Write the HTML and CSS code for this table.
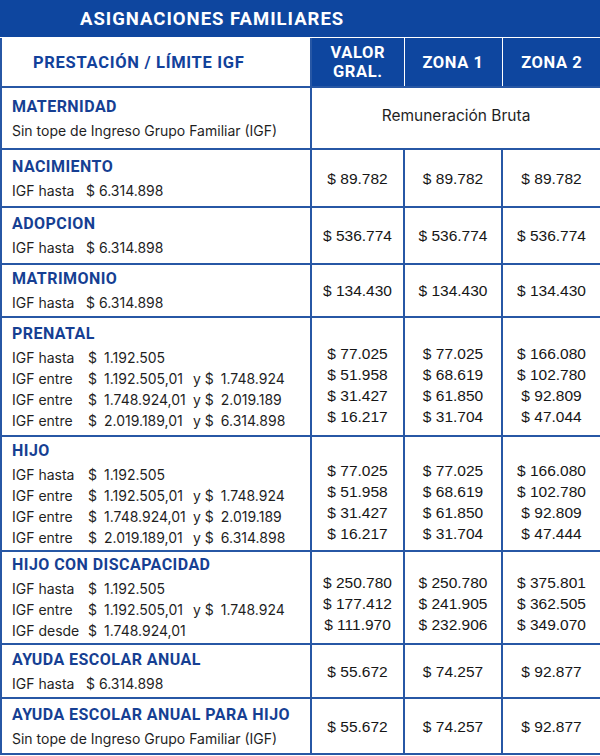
FILE: index.html
```html
<!DOCTYPE html>
<html lang="es">
<head>
<meta charset="utf-8">
<title>Asignaciones Familiares</title>
<link rel="stylesheet" href="styles.css">
</head>
<body>
<div class="title">ASIGNACIONES FAMILIARES</div>
<table class="grid">
  <colgroup>
    <col class="c1"><col class="c2"><col class="c3"><col class="c4">
  </colgroup>
  <thead>
    <tr class="hrow">
      <th class="h-main">PRESTACIÓN / LÍMITE IGF</th>
      <th class="h-val">VALOR<br>GRAL.</th>
      <th class="h-val">ZONA 1</th>
      <th class="h-val last">ZONA 2</th>
    </tr>
  </thead>
  <tbody>
    <tr class="r-mat">
      <td class="lab"><div class="name">MATERNIDAD</div><div class="ln">Sin tope de Ingreso Grupo Familiar (IGF)</div></td>
      <td class="span" colspan="3">Remuneración Bruta</td>
    </tr>
    <tr class="r-nac">
      <td class="lab"><div class="name">NACIMIENTO</div><div class="ln"><span class="k2">IGF hasta</span>$ 6.314.898</div></td>
      <td class="val">$ 89.782</td><td class="val">$ 89.782</td><td class="val">$ 89.782</td>
    </tr>
    <tr class="r-ado">
      <td class="lab"><div class="name">ADOPCION</div><div class="ln"><span class="k2">IGF hasta</span>$ 6.314.898</div></td>
      <td class="val">$ 536.774</td><td class="val">$ 536.774</td><td class="val">$ 536.774</td>
    </tr>
    <tr class="r-matr">
      <td class="lab"><div class="name">MATRIMONIO</div><div class="ln"><span class="k2">IGF hasta</span>$ 6.314.898</div></td>
      <td class="val">$ 134.430</td><td class="val">$ 134.430</td><td class="val">$ 134.430</td>
    </tr>
    <tr class="r-pre">
      <td class="lab"><div class="name">PRENATAL</div>
        <div class="ln"><span class="k">IGF hasta</span><span class="d">$</span>1.192.505</div>
        <div class="ln"><span class="k">IGF entre</span><span class="d">$</span><span class="a">1.192.505,01</span>y $<span class="a2">1.748.924</span></div>
        <div class="ln"><span class="k">IGF entre</span><span class="d">$</span><span class="a">1.748.924,01</span>y $<span class="a2">2.019.189</span></div>
        <div class="ln"><span class="k">IGF entre</span><span class="d">$</span><span class="a">2.019.189,01</span>y $<span class="a2">6.314.898</span></div>
      </td>
      <td class="val multi"><div>$ 77.025</div><div>$ 51.958</div><div>$ 31.427</div><div>$ 16.217</div></td>
      <td class="val multi"><div>$ 77.025</div><div>$ 68.619</div><div>$ 61.850</div><div>$ 31.704</div></td>
      <td class="val multi"><div>$ 166.080</div><div>$ 102.780</div><div>$ 92.809</div><div>$ 47.044</div></td>
    </tr>
    <tr class="r-hijo">
      <td class="lab"><div class="name">HIJO</div>
        <div class="ln"><span class="k">IGF hasta</span><span class="d">$</span>1.192.505</div>
        <div class="ln"><span class="k">IGF entre</span><span class="d">$</span><span class="a">1.192.505,01</span>y $<span class="a2">1.748.924</span></div>
        <div class="ln"><span class="k">IGF entre</span><span class="d">$</span><span class="a">1.748.924,01</span>y $<span class="a2">2.019.189</span></div>
        <div class="ln"><span class="k">IGF entre</span><span class="d">$</span><span class="a">2.019.189,01</span>y $<span class="a2">6.314.898</span></div>
      </td>
      <td class="val multi"><div>$ 77.025</div><div>$ 51.958</div><div>$ 31.427</div><div>$ 16.217</div></td>
      <td class="val multi"><div>$ 77.025</div><div>$ 68.619</div><div>$ 61.850</div><div>$ 31.704</div></td>
      <td class="val multi"><div>$ 166.080</div><div>$ 102.780</div><div>$ 92.809</div><div>$ 47.444</div></td>
    </tr>
    <tr class="r-disc">
      <td class="lab"><div class="name">HIJO CON DISCAPACIDAD</div>
        <div class="ln"><span class="k">IGF hasta</span><span class="d">$</span>1.192.505</div>
        <div class="ln"><span class="k">IGF entre</span><span class="d">$</span><span class="a">1.192.505,01</span>y $<span class="a2">1.748.924</span></div>
        <div class="ln"><span class="k">IGF desde</span><span class="d">$</span>1.748.924,01</div>
      </td>
      <td class="val multi3"><div>$ 250.780</div><div>$ 177.412</div><div>$ 111.970</div></td>
      <td class="val multi3"><div>$ 250.780</div><div>$ 241.905</div><div>$ 232.906</div></td>
      <td class="val multi3"><div>$ 375.801</div><div>$ 362.505</div><div>$ 349.070</div></td>
    </tr>
    <tr class="r-aea">
      <td class="lab"><div class="name">AYUDA ESCOLAR ANUAL</div><div class="ln"><span class="k2">IGF hasta</span>$ 6.314.898</div></td>
      <td class="val">$ 55.672</td><td class="val">$ 74.257</td><td class="val">$ 92.877</td>
    </tr>
    <tr class="r-aeh">
      <td class="lab"><div class="name">AYUDA ESCOLAR ANUAL PARA HIJO</div><div class="ln">Sin tope de Ingreso Grupo Familiar (IGF)</div></td>
      <td class="val">$ 55.672</td><td class="val">$ 74.257</td><td class="val">$ 92.877</td>
    </tr>
  </tbody>
</table>
</body>
</html>
```

FILE: styles.css
```css
html, body {
  margin: 0;
  padding: 0;
  background: #ffffff;
}

body {
  width: 600px;
  overflow: hidden;
}

.title {
  height: 37px;
  margin-bottom: 1px;
  padding-left: 80px;
  background: #0e469f;
  color: #ffffff;
  font-family: Roboto, "Liberation Sans", sans-serif;
  font-weight: 700;
  font-size: 18.5px;
  letter-spacing: 1px;
  line-height: 38px;
}

.grid {
  width: 600px;
  border-collapse: collapse;
  table-layout: fixed;
}

.c1 { width: 310px; }
.c2 { width: 93px; }
.c3 { width: 98px; }
.c4 { width: 99px; }

.grid td,
.grid th {
  border: 2px solid #2757a5;
  padding: 0;
}

.hrow { height: 49px; }

.h-main {
  border-top: none !important;
  text-align: left;
  padding-left: 31px !important;
  color: #12419b;
  font-family: Roboto, "Liberation Sans", sans-serif;
  font-weight: 700;
  font-size: 16.5px;
  letter-spacing: 0.7px;
}

.h-val {
  background: #0e469f;
  color: #ffffff;
  border-top: none !important;
  border-left: 1px solid #ffffff !important;
  border-right: 1px solid #ffffff !important;
  font-family: Roboto, "Liberation Sans", sans-serif;
  font-weight: 700;
  font-size: 16.5px;
  letter-spacing: 0.6px;
  line-height: 19px;
  text-align: center;
}

.h-val.last {
  border-right: none !important;
}

.lab {
  padding-left: 10px !important;
  vertical-align: middle;
}

.name {
  color: #163f93;
  font-family: Roboto, "Liberation Sans", sans-serif;
  font-weight: 700;
  font-size: 16px;
  line-height: 22px;
  margin-bottom: 2px;
  letter-spacing: 0.45px;
}

.ln {
  color: #1f1f1f;
  font-family: Inter, "Noto Sans", sans-serif;
  font-size: 14px;
  line-height: 21px;
  white-space: nowrap;
}

.k {
  display: inline-block;
  width: 76px;
}

.k2 {
  display: inline-block;
  width: 74px;
}

.d {
  display: inline-block;
  width: 16px;
}

.a {
  display: inline-block;
  width: 89px;
}

.a2 {
  padding-left: 7px;
}

.span {
  text-align: center;
  vertical-align: middle;
  color: #1f1f1f;
  font-family: Inter, "Noto Sans", sans-serif;
  font-size: 15.5px;
  padding-bottom: 6px !important;
}

.val {
  text-align: center;
  vertical-align: middle;
  color: #161616;
  font-family: "Liberation Sans", Arial, sans-serif;
  font-size: 15.5px;
  line-height: 21px;
}

.val.multi { padding-top: 17px !important; }
.val.multi3 { padding-top: 12px !important; }

.r-mat { height: 62px; }
.r-nac { height: 58px; }
.r-ado { height: 57px; }
.r-matr { height: 53px; }
.r-pre { height: 119px; }
.r-hijo { height: 115px; }
.r-disc { height: 93px; }
.r-aea { height: 54px; }
.r-aeh { height: 56px; }
```
